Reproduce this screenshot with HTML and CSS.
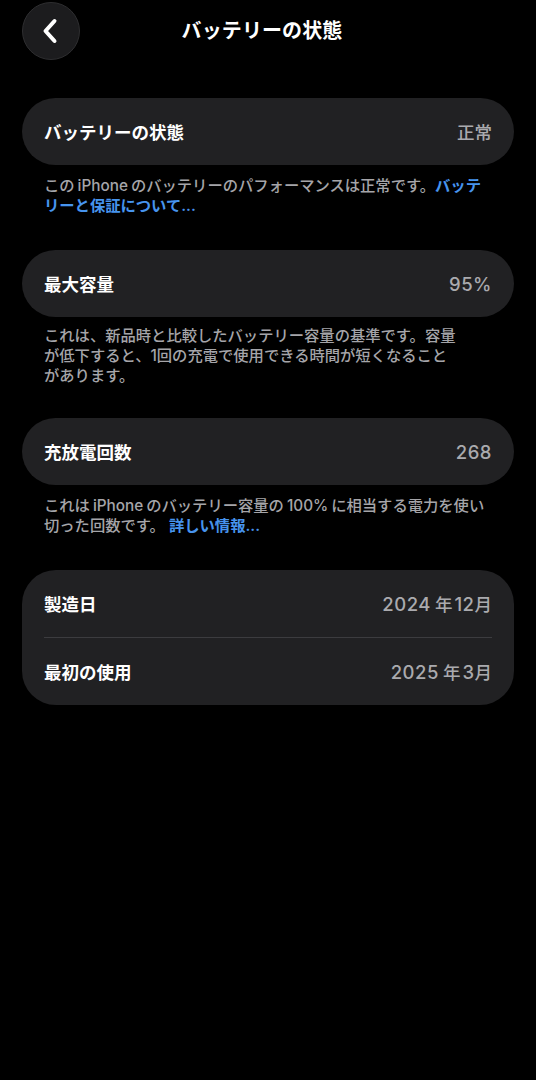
FILE: index.html
```html
<!DOCTYPE html>
<html lang="ja">
<head>
<meta charset="utf-8">
<title>バッテリーの状態</title>
<link rel="stylesheet" href="styles.css">
</head>
<body>
<header class="nav">
  <button class="back" aria-label="戻る">
    <svg width="16" height="26" viewBox="0 0 16 26"><path d="M12.5 3 L3.5 13 L12.5 23" fill="none" stroke="#fff" stroke-width="4" stroke-linecap="round" stroke-linejoin="round"/></svg>
  </button>
  <h1 class="title">バッテリーの状態</h1>
  <span class="spacer"></span>
</header>
<main class="content">
  <section class="group">
    <div class="card">
      <div class="row"><span class="label">バッテリーの状態</span><span class="value">正常</span></div>
    </div>
    <p class="note">この<span class="latin">iPhone</span>のバッテリーのパフォーマンスは正常です。<a class="link">バッテ<br>リーと保証について...</a></p>
  </section>
  <section class="group">
    <div class="card">
      <div class="row"><span class="label">最大容量</span><span class="value digits">95%</span></div>
    </div>
    <p class="note note-tight">これは、新品時と比較したバッテリー容量の基準です。容量<br>が低下すると、1回の充電で使用できる時間が短くなること<br>があります。</p>
  </section>
  <section class="group group-tight">
    <div class="card">
      <div class="row"><span class="label">充放電回数</span><span class="value digits">268</span></div>
    </div>
    <p class="note">これは<span class="latin">iPhone</span>のバッテリー容量の<span class="latin">100%</span>に相当する電力を使い<br>切った回数です。 <a class="link">詳しい情報...</a></p>
  </section>
  <section class="group">
    <div class="card">
      <div class="row"><span class="label">製造日</span><span class="value"><span class="num">2024</span>年<span class="num num-l">12</span>月</span></div>
      <div class="divider"></div>
      <div class="row"><span class="label">最初の使用</span><span class="value"><span class="num">2025</span>年<span class="num num-l">3</span>月</span></div>
    </div>
  </section>
</main>
</body>
</html>
```

FILE: styles.css
```css
* { box-sizing: border-box; }
html, body {
  margin: 0;
  padding: 0;
  background: #000;
  color: #fff;
  font-family: Inter, "Noto Sans CJK JP", sans-serif;
  height: 100%;
}
.nav {
  display: grid;
  grid-template-columns: 58px 1fr 58px;
  align-items: center;
  padding: 1px 22px 0 22px;
  height: 61px;
}
.back {
  width: 58px;
  height: 58px;
  border-radius: 50%;
  background: #1c1c1e;
  border: 1px solid #2e2e30;
  display: flex;
  align-items: center;
  justify-content: center;
  padding: 0 2px 0 0;
  margin: 0;
}
.title {
  margin: 0 12px 0 0;
  text-align: center;
  font-size: 20px;
  font-weight: 700;
  line-height: 28px;
  letter-spacing: 0.1px;
}
.content {
  display: flex;
  flex-direction: column;
  gap: 34px;
  padding: 37px 22px 0 22px;
}
.group {
  display: flex;
  flex-direction: column;
}
.group-tight { margin-top: -2px; }
.card {
  background: #212123;
  border-radius: 34px;
  padding: 0 22px;
  display: flex;
  flex-direction: column;
}
.row {
  height: 67px;
  display: flex;
  align-items: center;
  justify-content: space-between;
}
.divider {
  height: 1px;
  background: #3c3c3f;
}
.label {
  font-size: 17.5px;
  font-weight: 600;
  color: #fff;
}
.value {
  font-size: 17.5px;
  font-weight: 500;
  color: #aaaaae;
}
.digits, .num {
  font-size: 18.5px;
  letter-spacing: 0.5px;
}
.num { margin-right: 4px; }
.num-l { margin-left: 2px; margin-right: 0; }
.latin { margin: 0 3px; }
.note {
  margin: 0;
  padding: 11px 0 0 22px;
  font-size: 15.3px;
  line-height: 20px;
  font-weight: 500;
  color: #a5a5a9;
  white-space: nowrap;
}
.note-tight { padding-top: 9px; }
.link {
  color: #4794ee;
  font-weight: 600;
}
```
